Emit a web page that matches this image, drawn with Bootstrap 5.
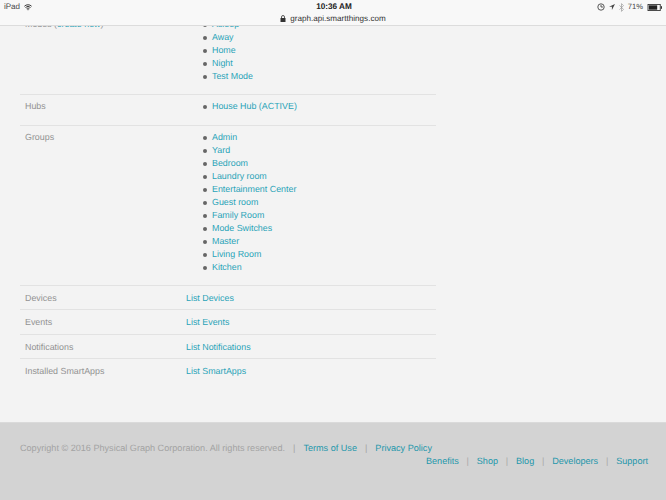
<!doctype html>
<html lang="en"><head><meta charset="utf-8">
<link href="https://cdn.jsdelivr.net/npm/bootstrap@5.3.0/dist/css/bootstrap.min.css" rel="stylesheet">
<style>
html,body{height:500px;overflow:hidden}
body{background:#f3f3f3;font-family:"Liberation Sans",Arial,sans-serif;font-size:8.9px;line-height:13px;color:#929292;position:relative;text-rendering:geometricPrecision}
a{color:#2aa3b8;text-decoration:none}
.ios-bar{position:absolute;top:0;left:0;right:0;height:26px;background:#f8f8f8;border-bottom:1px solid #dcdcdc;color:#333;z-index:5}
.ios-left{left:4px;top:1px;font-size:8px;line-height:12px;color:#444}
.ios-mid{left:0;right:0;top:0;text-align:center}
.ios-time{font-weight:700;font-size:8.2px;line-height:13px;color:#222;padding-left:2px}
.ios-url{font-size:8.1px;line-height:11px;color:#333}
.ios-right{right:3px;top:1px;font-size:7.6px;line-height:12px;color:#444}
.sheet{height:422px;padding:18px 230px 0 20px;overflow:hidden}
.trow{display:flex;border-bottom:1px solid #e2e2e2;padding:0 5px}
.trow:last-child{border-bottom:0}
.tlabel{width:161px;flex:none}
.tlist{margin:0;padding-left:26px;list-style:none;color:#666}
.tlist li{display:flex;align-items:center}
.tlist li::before{content:"";width:4px;height:4px;border-radius:50%;background:#666;margin:0 5px 0 -9px;flex:none}
.r-first{height:77px}
.r-hub{height:31px;padding-top:5px}
.r-group{height:160px;padding-top:5px}
.r-one{height:24.3px;padding-top:6px}
.foot{height:78px;background:#d3d3d3;border-top:1px solid #dadada;padding:19px 18px 0 20px;color:#a3a3a3;font-size:9.1px;line-height:13px}
.foot a{color:#1f97ab}
.fsep{margin:0 8px;}
.fsep2{margin:0 7.8px;color:#a9a9a9}
</style></head><body>
<header class="ios-bar">
<div class="position-absolute ios-left d-flex align-items-center gap-1"><span>iPad</span>
<svg width="8" height="7" viewBox="0 0 11 8"><path d="M.5 2.3a7 7 0 0 1 10 0M2 4a5 5 0 0 1 7 0M3.6 5.6a2.6 2.6 0 0 1 3.8 0" fill="none" stroke="#333" stroke-width="1.3"/><path d="M4.2 6.3h2.6L5.5 8z" fill="#333"/></svg></div>
<div class="position-absolute ios-mid"><div class="ios-time">10:36 AM</div>
<div class="ios-url d-flex justify-content-center align-items-center gap-1"><svg width="6" height="7" viewBox="0 0 6 7"><rect x=".5" y="3" width="5" height="4" fill="#333"/><path d="M1.5 3V2a1.5 1.5 0 0 1 3 0v1" fill="none" stroke="#333" stroke-width=".8"/></svg><span>graph.api.smartthings.com</span></div></div>
<div class="position-absolute ios-right d-flex align-items-center gap-1">
<svg width="8" height="8" viewBox="0 0 9 9"><circle cx="4.5" cy="4.5" r="3.6" fill="none" stroke="#444"/><path d="M4.5 2.2v2.3h2.2" fill="none" stroke="#444"/></svg>
<svg width="6" height="6" viewBox="0 0 7 7"><path d="M7 0 0 3.2h3.4V7z" fill="#444"/></svg>
<svg width="5" height="9" viewBox="0 0 5 9"><path d="M.5 2.4l4 4-2 2V.6l2 2-4 4" fill="none" stroke="#999" stroke-width=".7"/></svg>
<span>71%</span>
<svg width="16" height="7" viewBox="0 0 17 8"><rect x=".5" y=".5" width="14" height="7" fill="none" stroke="#333"/><rect x="1.5" y="1.5" width="9.5" height="5" fill="#222"/><rect x="15.2" y="2.5" width="1.3" height="3" fill="#333"/></svg>
</div>
</header>
<main class="sheet">
<div class="trow r-first"><div class="tlabel">Modes (<a href="#">create new</a>)</div>
<ul class="tlist"><li><a href="#">Asleep</a></li><li><a href="#">Away</a></li><li><a href="#">Home</a></li><li><a href="#">Night</a></li><li><a href="#">Test Mode</a></li></ul></div>
<div class="trow r-hub"><div class="tlabel">Hubs</div><ul class="tlist"><li><a href="#">House Hub (ACTIVE)</a></li></ul></div>
<div class="trow r-group"><div class="tlabel">Groups</div>
<ul class="tlist"><li><a href="#">Admin</a></li><li><a href="#">Yard</a></li><li><a href="#">Bedroom</a></li><li><a href="#">Laundry room</a></li><li><a href="#">Entertainment Center</a></li><li><a href="#">Guest room</a></li><li><a href="#">Family Room</a></li><li><a href="#">Mode Switches</a></li><li><a href="#">Master</a></li><li><a href="#">Living Room</a></li><li><a href="#">Kitchen</a></li></ul></div>
<div class="trow r-one"><div class="tlabel">Devices</div><a href="#">List Devices</a></div>
<div class="trow r-one"><div class="tlabel">Events</div><a href="#">List Events</a></div>
<div class="trow r-one"><div class="tlabel">Notifications</div><a href="#">List Notifications</a></div>
<div class="trow r-one"><div class="tlabel">Installed SmartApps</div><a href="#">List SmartApps</a></div>
</main>
<footer class="foot">
<div>Copyright © 2016 Physical Graph Corporation. All rights reserved.<span class="fsep">|</span><a href="#">Terms of Use</a><span class="fsep">|</span><a href="#">Privacy Policy</a></div>
<div class="text-end"><a href="#">Benefits</a><span class="fsep2">|</span><a href="#">Shop</a><span class="fsep2">|</span><a href="#">Blog</a><span class="fsep2">|</span><a href="#">Developers</a><span class="fsep2">|</span><a href="#">Support</a></div>
</footer>
</body></html>
